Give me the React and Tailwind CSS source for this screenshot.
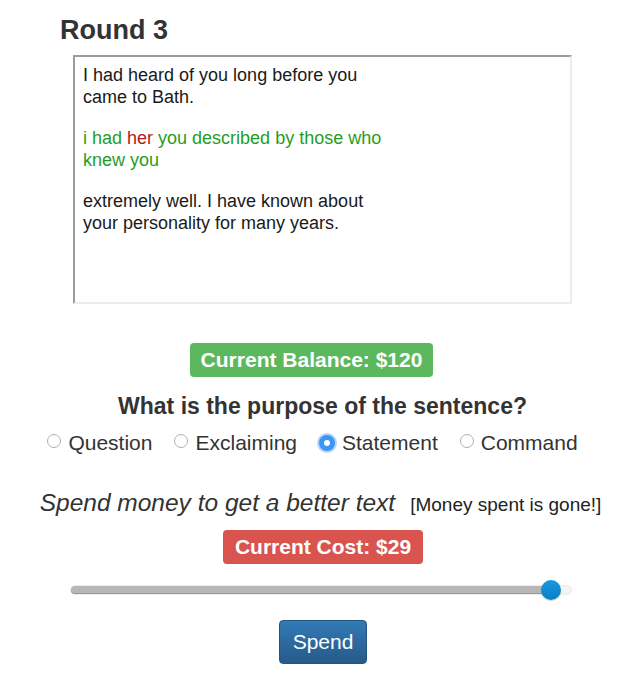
import React from 'react';

const font = { fontFamily: '"Liberation Sans", Arial, sans-serif' };

function Radio({ label, checked }) {
  return (
    <label className="flex items-center gap-[7px]">
      {checked ? (
        <span className="w-[16px] h-[16px] rounded-full bg-[#3d95f5] flex items-center justify-center shadow-[0_0_0_2px_rgba(90,160,250,0.45)]">
          <span className="w-[6px] h-[6px] rounded-full bg-white" />
        </span>
      ) : (
        <span className="w-[14px] h-[14px] rounded-full border border-[#b0b0b0] bg-white mt-[-4px]" />
      )}
      <span className="text-[21px] leading-[24px] text-[#333]">{label}</span>
    </label>
  );
}

export default function App() {
  const options = ['Question', 'Exclaiming', 'Statement', 'Command'];
  return (
    <div className="w-[625px] h-[683px] bg-white" style={font}>
      <h2 className="pl-[60px] pt-[14px] text-[27px] leading-[32px] font-bold text-[#333]">Round 3</h2>

      <div className="ml-[73px] mt-[9px] w-[499px] h-[249px] border-2 border-t-[#9c9c9c] border-l-[#9c9c9c] border-r-[#ececec] border-b-[#ececec] pl-[8px] pt-[7px]">
        <div className="w-[310px] text-[18px] leading-[22px] text-[#1a1a1a] flex flex-col gap-[19px]">
          <p>I had heard of you long before you came to Bath.</p>
          <p className="text-[#1f9e1f]">
            i had <span className="text-[#b01c1c]">her</span> you described by those who knew you
          </p>
          <p>extremely well. I have known about your personality for many years.</p>
        </div>
      </div>

      <div className="flex justify-center mt-[39px] pr-[2px]">
        <span className="bg-[#5cb85c] text-white font-bold text-[21px] leading-[34px] px-[11px] rounded-[4px]">
          Current Balance: $120
        </span>
      </div>

      <p className="mt-[15px] pl-[20px] text-center text-[23px] leading-[28px] font-bold text-[#333]">
        What is the purpose of the sentence?
      </p>

      <div className="flex justify-center gap-[22px] mt-[11px]">
        {options.map((o) => (
          <Radio key={o} label={o} checked={o === 'Statement'} />
        ))}
      </div>

      <div className="flex justify-center items-baseline gap-[15px] mt-[33px] pl-[16px]">
        <span className="italic text-[24.5px] leading-[29px] text-[#333]">Spend money to get a better text</span>
        <span className="text-[19px] text-[#222]">[Money spent is gone!]</span>
      </div>

      <div className="flex justify-center mt-[10px] pl-[21px]">
        <span className="bg-[#d9534f] text-white font-bold text-[21px] leading-[34px] px-[12px] rounded-[4px]">
          Current Cost: $29
        </span>
      </div>

      <div className="ml-[70px] mt-[21px] w-[502px] h-[10px] rounded-full bg-[#f4f4f4] border border-[#ececec] relative">
        <div className="h-full w-[481px] rounded-full bg-[#b7b7b7] shadow-[inset_0_-1px_0_#9a9a9a]" />
        <span className="absolute left-[470px] top-[-6px] w-[20px] h-[20px] rounded-full bg-gradient-to-b from-[#1598e0] to-[#0a7fc4] shadow-[0_1px_1px_rgba(0,0,0,0.2)]" />
      </div>

      <div className="flex justify-center mt-[25px] pl-[21px]">
        <button className="w-[88px] h-[44px] rounded-[4px] border border-[#245580] bg-gradient-to-b from-[#337ab7] to-[#265a88] text-white text-[21px]">
          Spend
        </button>
      </div>
    </div>
  );
}
